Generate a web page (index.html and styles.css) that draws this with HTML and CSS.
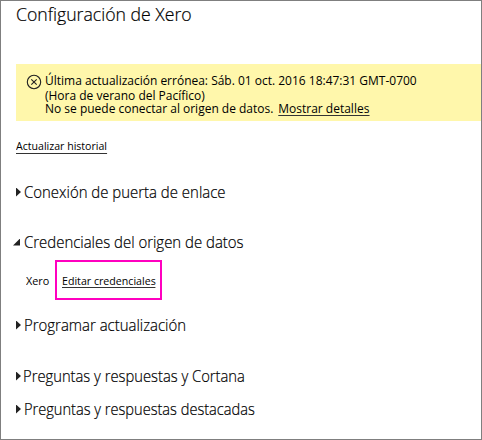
FILE: index.html
```html
<!DOCTYPE html>
<html lang="es">
<head>
<meta charset="utf-8">
<title>Configuración de Xero</title>
<link rel="stylesheet" href="styles.css">
</head>
<body>
<main class="panel">
  <h1 class="title">Configuración de Xero</h1>
  <section class="alert">
    <svg class="alert-icon" viewBox="0 0 16 16"><circle cx="8" cy="8" r="6.7"/><path d="M5.3 5.3l5.4 5.4M10.7 5.3l-5.4 5.4"/></svg>
    <div class="alert-text">
      <p class="line when">Última actualización errónea: Sáb. 01 oct. 2016 18:47:31 GMT-0700</p>
      <p class="line zone">(Hora de verano del Pacífico)</p>
      <p class="line cause">No se puede conectar al origen de datos. <a class="details">Mostrar detalles</a></p>
    </div>
  </section>
  <a class="history">Actualizar historial</a>
  <h2 class="row gateway"><i class="closed"></i><span>Conexión de puerta de enlace</span></h2>
  <h2 class="row credentials"><i class="open"></i><span>Credenciales del origen de datos</span></h2>
  <div class="source"><span class="name">Xero</span><div class="highlight"><a class="edit">Editar credenciales</a></div></div>
  <h2 class="row schedule"><i class="closed"></i><span>Programar actualización</span></h2>
  <h2 class="row cortana"><i class="closed"></i><span>Preguntas y respuestas y Cortana</span></h2>
  <h2 class="row featured"><i class="closed"></i><span>Preguntas y respuestas destacadas</span></h2>
</main>
</body>
</html>
```
FILE: styles.css
```css
* { box-sizing: border-box; margin: 0; padding: 0; }
body { background: #fff; color: #000; font-family: "Open Sans", "Noto Sans", sans-serif; }
.panel { display: flex; flex-direction: column; align-items: flex-start; width: 482px; height: 440px; border: 1px solid #7f7f7f; padding-left: 15px; overflow: hidden; white-space: nowrap; }
.title { font-size: 18px; font-weight: 300; line-height: 24px; margin-top: 1px; -webkit-text-stroke: .2px #000; transform: scaleX(.98); transform-origin: left; }
.alert { display: flex; align-self: stretch; height: 57px; margin-top: 38px; padding: 9px 0 0 10px; background: #fff7ab; }
.alert-icon { width: 16px; height: 16px; margin: 1px 3px 0 0; fill: none; stroke: #222; stroke-width: 1.1; }
.line { width: max-content; font-size: 13px; line-height: 14px; height: 14px; transform: scaleX(.922); transform-origin: left; }
.zone { margin-top: 1px; }
.cause { margin-top: -1px; }
.details { display: inline-block; height: 15px; margin-left: 2px; border-bottom: 1px solid #333; }
.history { font-size: 11.5px; line-height: 14px; height: 15px; margin-top: 18px; border-bottom: 1px solid #333; transform: scaleX(.92); transform-origin: left; }
.row { display: flex; align-items: center; height: 20px; font-size: 16px; font-weight: 300; line-height: 20px; -webkit-text-stroke: .2px #000; }
.row span { transform: scaleX(.934); transform-origin: left; }
.closed { width: 5px; height: 9px; margin-right: 3px; background: #222; clip-path: polygon(0 0, 100% 50%, 0 100%); }
.open { width: 7px; height: 7px; margin: 0 4px 0 -3px; background: #222; clip-path: polygon(100% 0, 100% 100%, 0 100%); }
.gateway { margin-top: 28px; }
.credentials { margin-top: 30px; }
.source { display: flex; align-items: center; height: 40px; margin: 8px 0 0 10px; font-size: 11.5px; line-height: 14px; }
.name { width: 29px; padding-top: 2px; transform: scaleX(.94); transform-origin: left; }
.highlight { width: 107px; height: 40px; padding: 12px 0 0 5px; border: 2px solid #ff00bf; }
.edit { display: block; width: max-content; height: 14px; border-bottom: 1px solid #333; transform: scaleX(.925); transform-origin: left; }
.schedule { margin-top: 15px; }
.cortana { margin-top: 31px; }
.cortana .closed { margin-right: 2px; }
.row.cortana span { transform: scaleX(.923); }
.featured { margin-top: 13px; }
.row.featured span { transform: scaleX(.913); }
```
